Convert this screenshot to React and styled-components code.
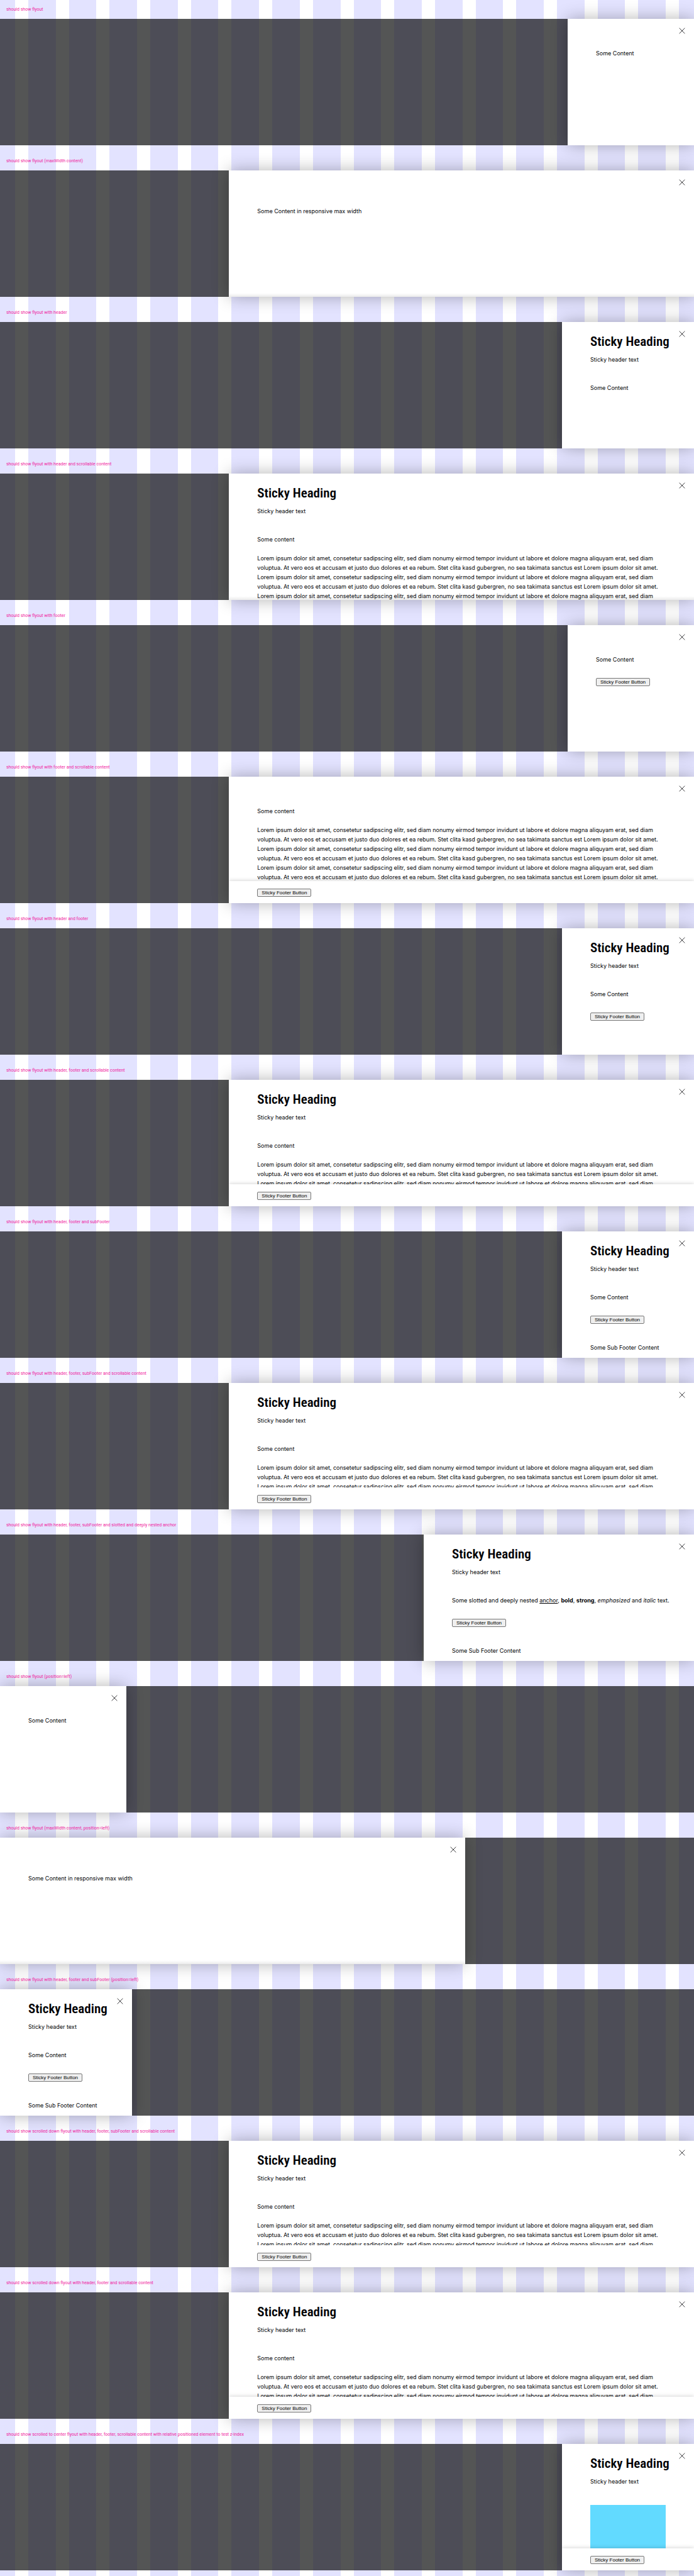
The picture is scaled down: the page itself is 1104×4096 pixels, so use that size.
import React from "react";
import styled, { createGlobalStyle, css } from "styled-components";

const GlobalStyle = createGlobalStyle`
  *, *::before, *::after { box-sizing: border-box; }
  body { margin: 0; }
  h2, h3, p { margin: 0; }
`;

/* Sixteen column grid with a 45px page margin and a 21px gutter. */
const columns = (column, gutter) => css`
  --column: calc((100% - 405px) / 16);
  background: repeating-linear-gradient(
    to right,
    ${gutter} 24px,
    ${gutter} 45px,
    ${column} 45px,
    ${column} calc(45px + var(--column))
  );
`;

const panelWidths = { small: "201px", medium: "210px", text: "430px", wide: "67%" };

const Page = styled.main`
  display: grid;
  grid-auto-rows: minmax(240px, 1fr);
  min-height: 100vh;
  overflow: hidden;
  color: #010205;
  font-family: Inter, "Liberation Sans", sans-serif;
  font-size: 9px;
  line-height: 15px;
  ${columns("#e3e3ff", "#ffffff")}
`;

const Example = styled.section`
  display: flex;
  flex-direction: column;
  min-height: 0;
  padding-bottom: 10px;
`;

const ExampleTitle = styled.h2`
  position: relative;
  z-index: 1;
  flex: none;
  height: 30px;
  padding-left: 10px;
  color: #f01ba0;
  font-family: Roboto, "Liberation Sans", sans-serif;
  font-size: 7px;
  font-weight: 400;
  line-height: 30px;
`;

const Backdrop = styled.div`
  display: flex;
  flex: 1;
  min-height: 0;
  justify-content: ${({ $side }) => ($side === "left" ? "flex-start" : "flex-end")};
  ${columns("#4d4d57", "#545555")}
`;

const Panel = styled.div`
  position: relative;
  display: flex;
  flex-direction: column;
  width: ${({ $size }) => panelWidths[$size]};
  height: 201px;
  max-height: 100%;
  background: #ffffff;
  box-shadow: 0 0 25px rgba(0, 0, 0, 0.3);
`;

const CloseButton = styled.button`
  position: absolute;
  top: 11px;
  right: 11px;
  z-index: 2;
  display: grid;
  place-items: center;
  width: 16px;
  height: 16px;
  padding: 0;
  border: 0;
  background: none;
  color: #010205;
`;

const Header = styled.header`
  display: flex;
  flex: none;
  flex-direction: column;
  gap: 10px;
  padding: 20px 0 15px 45px;
`;

const Heading = styled.h3`
  font-family: "Roboto Condensed", Roboto, sans-serif;
  font-size: 21px;
  font-weight: 600;
  line-height: 22px;
  white-space: nowrap;
`;

const Content = styled.div`
  display: flex;
  flex: 0 1 auto;
  flex-direction: column;
  gap: 15px;
  min-height: 0;
  padding: ${({ $underHeader }) => ($underHeader ? "15px" : "47px")} 45px 10px;
  overflow: hidden;
`;

const RichText = styled.p`
  white-space: nowrap;
`;

const SpacedText = styled.p`
  padding: 10px 0;
`;

const Anchor = styled.a`
  color: inherit;
  text-decoration: underline;
`;

const Block = styled.div`
  flex: none;
  width: 120px;
  height: 300px;
  background: #62daff;
`;

const Footer = styled.footer`
  position: relative;
  flex: none;
  display: flex;
  padding: 12px 45px 10px;
  background: #ffffff;
  box-shadow: ${({ $raised }) => ($raised ? "0 -1px 6px rgba(0, 0, 0, 0.16)" : "none")};
  clip-path: inset(-10px 0 0 0);
`;

const FooterButton = styled.button`
  height: 13px;
  padding: 0 6px;
  border: 1px solid #767676;
  border-radius: 2px;
  background: #efefef;
  color: #000000;
  font-family: "Liberation Sans", Arial, sans-serif;
  font-size: 8px;
  line-height: 11px;
  white-space: nowrap;
`;

const SubFooter = styled.div`
  flex: none;
  padding: 20px 45px 0;
`;

const ScrollShade = styled.div`
  position: absolute;
  right: 0;
  bottom: 0;
  left: 0;
  height: 6px;
  background: linear-gradient(to bottom, rgba(0, 0, 0, 0), rgba(0, 0, 0, 0.08));
`;

const lorem =
  "Lorem ipsum dolor sit amet, consetetur sadipscing elitr, sed diam nonumy eirmod tempor invidunt ut labore et dolore magna aliquyam erat, sed diam voluptua. At vero eos et accusam et justo duo dolores et ea rebum. Stet clita kasd gubergren, no sea takimata sanctus est Lorem ipsum dolor sit amet.";

function Scrollable() {
  return (
    <>
      <p>Some content</p>
      <p>{[lorem, lorem, lorem].join(" ")}</p>
    </>
  );
}

function SlottedText() {
  return (
    <RichText>
      Some slotted and deeply nested <Anchor href="#">anchor</Anchor>, <b>bold</b>, <strong>strong</strong>,{" "}
      <em>emphasized</em> and <i>italic</i> text.
    </RichText>
  );
}

const short = <p>Some Content</p>;
const maxWidth = <SpacedText>Some Content in responsive max width</SpacedText>;

const examples = [
  { title: "should show flyout", size: "small", content: short },
  { title: "should show flyout (maxWidth content)", size: "wide", content: maxWidth, shade: true },
  { title: "should show flyout with header", size: "medium", header: true, content: short },
  { title: "should show flyout with header and scrollable content", size: "wide", header: true, content: <Scrollable />, shade: true },
  { title: "should show flyout with footer", size: "small", content: short, footer: true },
  { title: "should show flyout with footer and scrollable content", size: "wide", content: <Scrollable />, footer: true, raised: true },
  { title: "should show flyout with header and footer", size: "medium", header: true, content: short, footer: true },
  { title: "should show flyout with header, footer and scrollable content", size: "wide", header: true, content: <Scrollable />, footer: true, raised: true },
  { title: "should show flyout with header, footer and subFooter", size: "medium", header: true, content: short, footer: true, subFooter: true },
  { title: "should show flyout with header, footer, subFooter and scrollable content", size: "wide", header: true, content: <Scrollable />, footer: true },
  { title: "should show flyout with header, footer, subFooter and slotted and deeply nested anchor", size: "text", header: true, content: <SlottedText />, footer: true, subFooter: true },
  { title: "should show flyout (position=left)", side: "left", size: "small", content: short },
  { title: "should show flyout (maxWidth content, position=left)", side: "left", size: "wide", content: maxWidth, shade: true },
  { title: "should show flyout with header, footer and subFooter (position=left)", side: "left", size: "medium", header: true, content: short, footer: true, subFooter: true },
  { title: "should show scrolled down flyout with header, footer, subFooter and scrollable content", size: "wide", header: true, content: <Scrollable />, footer: true },
  { title: "should show scrolled down flyout with header, footer and scrollable content", size: "wide", header: true, content: <Scrollable />, footer: true, raised: true },
  { title: "should show scrolled to center flyout with header, footer, scrollable content with relative positioned element to test z-index", size: "medium", header: true, content: <Block />, footer: true, raised: true },
];

function Flyout({ size, header, content, footer, raised, subFooter, shade }) {
  return (
    <Panel $size={size}>
      <CloseButton type="button" aria-label="Close">
        <svg width="10" height="10" viewBox="0 0 16 16" fill="none" stroke="currentColor" strokeWidth="1.2" aria-hidden="true">
          <path d="M1 1l14 14M15 1L1 15" />
        </svg>
      </CloseButton>
      {header && (
        <Header>
          <Heading>Sticky Heading</Heading>
          <p>Sticky header text</p>
        </Header>
      )}
      <Content $underHeader={header}>{content}</Content>
      {footer && (
        <Footer $raised={raised}>
          <FooterButton type="button">Sticky Footer Button</FooterButton>
        </Footer>
      )}
      {subFooter && <SubFooter>Some Sub Footer Content</SubFooter>}
      {shade && <ScrollShade />}
    </Panel>
  );
}

export default function App() {
  return (
    <>
      <GlobalStyle />
      <Page>
        {examples.map(({ title, side, ...flyout }) => (
          <Example key={title}>
            <ExampleTitle>{title}</ExampleTitle>
            <Backdrop $side={side}>
              <Flyout {...flyout} />
            </Backdrop>
          </Example>
        ))}
      </Page>
    </>
  );
}
